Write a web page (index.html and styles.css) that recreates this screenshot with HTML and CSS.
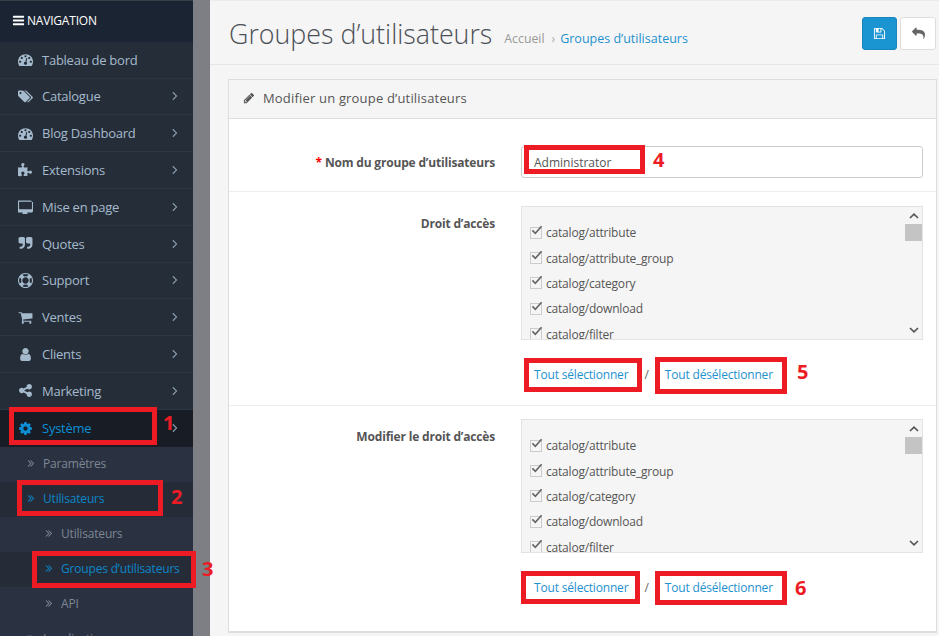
FILE: index.html
```html
<!DOCTYPE html>
<html lang="fr">
<head>
  <meta charset="UTF-8" />
  <title>Groupes d’utilisateurs</title>
  <link rel="stylesheet" href="styles.css">
</head>
<body>

<svg class="icon-defs" xmlns="http://www.w3.org/2000/svg">
  <symbol id="i-bars" viewBox="0 0 1792 1792"><path d="M1664 1344v128q0 26-19 45t-45 19h-1408q-26 0-45-19t-19-45v-128q0-26 19-45t45-19h1408q26 0 45 19t19 45zm0-512v128q0 26-19 45t-45 19h-1408q-26 0-45-19t-19-45v-128q0-26 19-45t45-19h1408q26 0 45 19t19 45zm0-512v128q0 26-19 45t-45 19h-1408q-26 0-45-19t-19-45v-128q0-26 19-45t45-19h1408q26 0 45 19t19 45z"/></symbol>
  <symbol id="i-dash" viewBox="0 0 1792 1792"><path d="M384 1152q0-53-37.5-90.5t-90.5-37.5-90.5 37.5-37.5 90.5 37.5 90.5 90.5 37.5 90.5-37.5 37.5-90.5zm192-448q0-53-37.5-90.5t-90.5-37.5-90.5 37.5-37.5 90.5 37.5 90.5 90.5 37.5 90.5-37.5 37.5-90.5zm428 481l101-382q6-26-7.5-48.5t-38.5-29.5-48 6.5-30 39.5l-101 382q-60 5-107 43.5t-63 98.5q-20 77 20 146t117 89 146-20 89-117q16-60-6-117t-72-91zm660-33q0-53-37.5-90.5t-90.5-37.5-90.5 37.5-37.5 90.5 37.5 90.5 90.5 37.5 90.5-37.5 37.5-90.5zm-640-640q0-53-37.5-90.5t-90.5-37.5-90.5 37.5-37.5 90.5 37.5 90.5 90.5 37.5 90.5-37.5 37.5-90.5zm448 192q0-53-37.5-90.5t-90.5-37.5-90.5 37.5-37.5 90.5 37.5 90.5 90.5 37.5 90.5-37.5 37.5-90.5zm320 448q0 261-141 483-19 29-54 29h-1402q-35 0-54-29-141-221-141-483 0-182 71-348t191-286 286-191 348-71 348 71 286 191 191 286 71 348z"/></symbol>
  <symbol id="i-tags" viewBox="0 0 1920 1792"><path d="M448 448q0-53-37.5-90.5t-90.5-37.5-90.5 37.5-37.5 90.5 37.5 90.5 90.5 37.5 90.5-37.5 37.5-90.5zm1067 576q0 53-37 90l-491 492q-39 37-91 37-53 0-90-37l-715-716q-38-37-64.5-101t-26.5-117v-416q0-52 38-90t90-38h416q53 0 117 26.5t102 64.5l715 714q37 39 37 91zm384 0q0 53-37 90l-491 492q-39 37-91 37-36 0-59-14t-53-45l470-470q37-37 37-90 0-52-37-91l-715-714q-38-38-102-64.5t-117-26.5h224q53 0 117 26.5t102 64.5l715 714q37 39 37 91z"/></symbol>
  <symbol id="i-puzzle" viewBox="0 0 1792 1792"><path d="M1664 1098q0 81-44.5 135t-123.5 54q-41 0-77.5-17.5t-59-38-56.5-38-71-17.5q-110 0-110 124 0 39 16 115t15 115v5q-22 0-33 1-34 3-97.5 11.5t-115.5 13.5-98 5q-61 0-103-26.5t-42-83.5q0-37 17.5-71t38-56.5 38-59 17.5-77.5q0-79-54-123.5t-135-44.5q-84 0-143 45.5t-59 127.5q0 43 15 83t33.5 64.5 33.5 53 15 50.5q0 45-46 89-37 35-117 35-95 0-245-24-9-2-27.5-4t-27.5-4l-13-2q-1 0-3-1-2 0-2-1v-1024q2 1 17.5 3.5t34 5 21.5 3.5q150 24 245 24 80 0 117-35 46-44 46-89 0-22-15-50.5t-33.5-53-33.5-64.5-15-83q0-82 59-127.5t144-45.5q80 0 134 44.5t54 123.5q0 41-17.5 77.5t-38 59-38 56.5-17.5 71q0 57 42 83.5t103 26.5q64 0 180-15t163-17v2q-1 2-3.5 17.5t-5 34-3.5 21.5q-24 150-24 245 0 80 35 117 44 46 89 46 22 0 50.5-15t53-33.5 64.5-33.5 83-15q82 0 127.5 59t45.5 143z"/></symbol>
  <symbol id="i-desktop" viewBox="0 -192 1792 1792"><path d="M1664 992v-832q0-13-9.5-22.5t-22.5-9.5h-1472q-13 0-22.5 9.5t-9.5 22.5v832q0 13 9.5 22.5t22.5 9.5h1472q13 0 22.5-9.5t9.5-22.5zm128-832v1088q0 66-47 113t-113 47h-544q0 37 16 77.5t32 71 16 43.5q0 26-19 45t-45 19h-512q-26 0-45-19t-19-45q0-14 16-44t32-70 16-78h-544q-66 0-113-47t-47-113v-1088q0-66 47-113t113-47h1472q66 0 113 47t47 113z"/></symbol>
  <symbol id="i-quote" viewBox="0 0 1792 1792"><path d="M832 320v704q0 104-40.5 198.5t-109.5 163.5-163.5 109.5-198.5 40.5h-64q-26 0-45-19t-19-45v-128q0-26 19-45t45-19h64q106 0 181-75t75-181v-32q0-40-28-68t-68-28h-224q-80 0-136-56t-56-136v-384q0-80 56-136t136-56h384q80 0 136 56t56 136zm896 0v704q0 104-40.5 198.5t-109.5 163.5-163.5 109.5-198.5 40.5h-64q-26 0-45-19t-19-45v-128q0-26 19-45t45-19h64q106 0 181-75t75-181v-32q0-40-28-68t-68-28h-224q-80 0-136-56t-56-136v-384q0-80 56-136t136-56h384q80 0 136 56t56 136z"/></symbol>
  <symbol id="i-ring" viewBox="0 0 1792 1792"><path d="M896 0q182 0 348 71t286 191 191 286 71 348-71 348-191 286-286 191-348 71-348-71-286-191-191-286-71-348 71-348 191-286 286-191 348-71zm0 128q-190 0-361 90l194 194q82-28 167-28t167 28l194-194q-171-90-361-90zm-678 1129l194-194q-28-82-28-167t28-167l-194-194q-90 171-90 361t90 361zm678 407q190 0 361-90l-194-194q-82 28-167 28t-167-28l-194 194q171 90 361 90zm0-384q159 0 271.5-112.5t112.5-271.5-112.5-271.5-271.5-112.5-271.5 112.5-112.5 271.5 112.5 271.5 271.5 112.5zm484-217l194 194q90-171 90-361t-90-361l-194 194q28 82 28 167t-28 167z"/></symbol>
  <symbol id="i-cart" viewBox="0 0 1792 1792"><path d="M704 1536q0 52-38 90t-90 38-90-38-38-90 38-90 90-38 90 38 38 90zm896 0q0 52-38 90t-90 38-90-38-38-90 38-90 90-38 90 38 38 90zm128-1088v512q0 24-16.5 42.5t-40.5 21.5l-1044 122q13 60 13 70 0 16-24 64h920q26 0 45 19t19 45-19 45-45 19h-1024q-26 0-45-19t-19-45q0-11 8-31.5t16-36 21.5-40 15.5-29.5l-177-823h-204q-26 0-45-19t-19-45 19-45 45-19h256q16 0 28.5 6.5t19.5 15.5 13 24.5 8 26 5.5 29.5 4.5 26h1201q26 0 45 19t19 45z"/></symbol>
  <symbol id="i-user" viewBox="0 0 1792 1792"><path d="M1536 1399q0 109-62.5 187t-150.5 78h-854q-88 0-150.5-78t-62.5-187q0-85 8.5-160.5t31.5-152 58.5-131 94-89 134.5-34.5q131 128 313 128t313-128q76 0 134.5 34.5t94 89 58.5 131 31.5 152 8.5 160.5zm-256-887q0 159-112.5 271.5t-271.5 112.5-271.5-112.5-112.5-271.5 112.5-271.5 271.5-112.5 271.5 112.5 112.5 271.5z"/></symbol>
  <symbol id="i-share" viewBox="0 0 1792 1792"><path d="M1344 1024q133 0 226.5 93.5t93.5 226.5-93.5 226.5-226.5 93.5-226.5-93.5-93.5-226.5q0-12 2-34l-360-180q-92 86-218 86-133 0-226.5-93.5t-93.5-226.5 93.5-226.5 226.5-93.5q126 0 218 86l360-180q-2-22-2-34 0-133 93.5-226.5t226.5-93.5 226.5 93.5 93.5 226.5-93.5 226.5-226.5 93.5q-126 0-218-86l-360 180q2 22 2 34t-2 34l360 180q92-86 218-86z"/></symbol>
  <symbol id="i-cog" viewBox="0 0 1792 1792"><path d="M1152 896q0-106-75-181t-181-75-181 75-75 181 75 181 181 75 181-75 75-181zm512-109v222q0 12-8 23t-20 13l-185 28q-19 54-39 91 35 50 107 138 10 12 10 25t-9 23q-27 37-99 108t-94 71q-12 0-26-9l-138-108q-44 23-91 38-16 136-29 186-7 28-36 28h-222q-14 0-24.5-8.5t-11.5-21.5l-28-184q-49-16-90-37l-141 107q-10 9-25 9-14 0-25-11-126-114-165-168-7-10-7-23 0-12 8-23 15-21 51-66.5t54-70.5q-27-50-41-99l-183-27q-13-2-21-12.5t-8-23.5v-222q0-12 8-23t19-13l186-28q14-46 39-92-40-57-107-138-10-12-10-24 0-10 9-23 26-36 98.5-107.5t94.5-71.5q13 0 26 10l138 107q44-23 91-38 16-136 29-186 7-28 36-28h222q14 0 24.5 8.5t11.5 21.5l28 184q49 16 90 37l142-107q9-9 24-9 13 0 25 10 129 119 165 170 7 8 7 22 0 12-8 23-15 21-51 66.5t-54 70.5q26 50 41 98l183 28q13 2 21 12.5t8 23.5z"/></symbol>
  <symbol id="i-double" viewBox="0 0 1792 1792"><path d="M979 960q0 13-10 23l-466 466q-10 10-23 10t-23-10l-50-50q-10-10-10-23t10-23l393-393-393-393q-10-10-10-23t10-23l50-50q10-10 23-10t23 10l466 466q10 10 10 23zm384 0q0 13-10 23l-466 466q-10 10-23 10t-23-10l-50-50q-10-10-10-23t10-23l393-393-393-393q-10-10-10-23t10-23l50-50q10-10 23-10t23 10l466 466q10 10 10 23z"/></symbol>
  <symbol id="i-angle" viewBox="0 0 8 12"><path d="M2 1.5 6.5 6 2 10.5" fill="none" stroke="currentColor" stroke-width="1.3"/></symbol>
  <symbol id="i-pencil" viewBox="0 0 1792 1792"><path d="M491 1536l91-91-235-235-91 91v107h128v128h107zm523-928q0-22-22-22-10 0-17 7l-542 542q-7 7-7 17 0 22 22 22 10 0 17-7l542-542q7-7 7-17zm-54-192l416 416-832 832h-416v-416zm683 96q0 53-37 90l-166 166-416-416 166-165q36-38 90-38 53 0 91 38l235 234q37 39 37 91z"/></symbol>
  <symbol id="i-save" viewBox="0 0 1792 1792"><path d="M512 1536h768v-384h-768v384zm896 0h128v-896q0-14-10-38.5t-20-34.5l-281-281q-10-10-34-20t-39-10v416q0 40-28 68t-68 28h-576q-40 0-68-28t-28-68v-416h-128v1280h128v-416q0-40 28-68t68-28h832q40 0 68 28t28 68v416zm-384-928v-320q0-13-9.5-22.5t-22.5-9.5h-192q-13 0-22.5 9.5t-9.5 22.5v320q0 13 9.5 22.5t22.5 9.5h192q13 0 22.5-9.5t9.5-22.5zm640 32v928q0 40-28 68t-68 28h-1344q-40 0-68-28t-28-68v-1344q0-40 28-68t68-28h928q40 0 88 20t76 48l280 280q28 28 48 76t20 88z"/></symbol>
  <symbol id="i-reply" viewBox="0 0 1792 1792"><path d="M1792 1120q0 166-127 451-3 7-10.5 24t-13.5 30-13 22q-12 17-28 17-15 0-23.5-10t-8.5-25q0-9 2.5-26.5t2.5-23.5q5-68 5-123 0-101-17.5-181t-48.5-138.5-80-101-105.5-69.5-133-42.5-154-21.5-175.5-6h-224v256q0 26-19 45t-45 19-45-19l-512-512q-19-19-19-45t19-45l512-512q19-19 45-19t45 19 19 45v256h224q713 0 875 403 53 134 53 333z"/></symbol>
  <symbol id="i-check" viewBox="0 0 14 12"><path d="M1.5 6.5 5 10 12.5 1.5" fill="none" stroke="currentColor" stroke-width="2"/></symbol>
  <symbol id="i-up" viewBox="0 0 10 6"><path d="M1 5 5 1.2 9 5" fill="none" stroke="currentColor" stroke-width="1.7"/></symbol>
  <symbol id="i-down" viewBox="0 0 10 6"><path d="M1 1 5 4.8 9 1" fill="none" stroke="currentColor" stroke-width="1.7"/></symbol>
</svg>

<div class="layout">

  <nav class="sidebar">
    <div class="nav-title"><svg class="bars"><use href="#i-bars"/></svg>NAVIGATION</div>
    <ul class="menu">
      <li class="menu-item"><svg class="menu-icon"><use href="#i-dash"/></svg>Tableau de bord</li>
      <li class="menu-item"><svg class="menu-icon"><use href="#i-tags"/></svg>Catalogue<svg class="arrow"><use href="#i-angle"/></svg></li>
      <li class="menu-item"><svg class="menu-icon"><use href="#i-dash"/></svg>Blog Dashboard<svg class="arrow"><use href="#i-angle"/></svg></li>
      <li class="menu-item"><svg class="menu-icon"><use href="#i-puzzle"/></svg>Extensions<svg class="arrow"><use href="#i-angle"/></svg></li>
      <li class="menu-item"><svg class="menu-icon"><use href="#i-desktop"/></svg>Mise en page<svg class="arrow"><use href="#i-angle"/></svg></li>
      <li class="menu-item"><svg class="menu-icon"><use href="#i-quote"/></svg>Quotes<svg class="arrow"><use href="#i-angle"/></svg></li>
      <li class="menu-item"><svg class="menu-icon"><use href="#i-ring"/></svg>Support<svg class="arrow"><use href="#i-angle"/></svg></li>
      <li class="menu-item"><svg class="menu-icon"><use href="#i-cart"/></svg>Ventes<svg class="arrow"><use href="#i-angle"/></svg></li>
      <li class="menu-item"><svg class="menu-icon"><use href="#i-user"/></svg>Clients<svg class="arrow"><use href="#i-angle"/></svg></li>
      <li class="menu-item"><svg class="menu-icon"><use href="#i-share"/></svg>Marketing<svg class="arrow"><use href="#i-angle"/></svg></li>
      <li class="menu-item active"><svg class="menu-icon"><use href="#i-cog"/></svg>Système<svg class="arrow"><use href="#i-angle"/></svg></li>
      <li class="sub-item"><svg class="sub-icon"><use href="#i-double"/></svg>Paramètres</li>
      <li class="sub-item current"><svg class="sub-icon"><use href="#i-double"/></svg>Utilisateurs</li>
      <li class="sub-item deep"><svg class="sub-icon"><use href="#i-double"/></svg>Utilisateurs</li>
      <li class="sub-item deep current"><svg class="sub-icon"><use href="#i-double"/></svg>Groupes d’utilisateurs</li>
      <li class="sub-item deep"><svg class="sub-icon"><use href="#i-double"/></svg>API</li>
      <li class="sub-item"><svg class="sub-icon"><use href="#i-double"/></svg>Localisation</li>
    </ul>
  </nav>

  <div class="gutter"></div>

  <main class="content">
    <header class="page-header">
      <h1>Groupes d’utilisateurs</h1>
      <span class="crumb">Accueil</span>
      <span class="crumb-sep">›</span>
      <a class="crumb-link">Groupes d’utilisateurs</a>
      <div class="actions">
        <button class="btn btn-primary"><svg><use href="#i-save"/></svg></button>
        <button class="btn btn-default"><svg><use href="#i-reply"/></svg></button>
      </div>
    </header>

    <section class="panel">
      <div class="panel-heading"><svg><use href="#i-pencil"/></svg>Modifier un groupe d’utilisateurs</div>

      <div class="form-row row-name">
        <label class="form-label"><span class="required">*</span> Nom du groupe d’utilisateurs</label>
        <div class="form-field"><input class="text-input" type="text" value="Administrator"></div>
      </div>

      <div class="form-row row-access">
        <label class="form-label">Droit d’accès</label>
        <div class="form-field">
          <div class="well">
            <div class="well-list">
              <div class="perm"><span class="tick"><svg><use href="#i-check"/></svg></span>catalog/attribute</div>
              <div class="perm"><span class="tick"><svg><use href="#i-check"/></svg></span>catalog/attribute_group</div>
              <div class="perm"><span class="tick"><svg><use href="#i-check"/></svg></span>catalog/category</div>
              <div class="perm"><span class="tick"><svg><use href="#i-check"/></svg></span>catalog/download</div>
              <div class="perm"><span class="tick"><svg><use href="#i-check"/></svg></span>catalog/filter</div>
            </div>
            <div class="scrollbar">
              <svg class="scroll-arrow"><use href="#i-up"/></svg>
              <div class="scroll-thumb"></div>
              <svg class="scroll-arrow down"><use href="#i-down"/></svg>
            </div>
          </div>
          <div class="select-links"><a>Tout sélectionner</a><span class="slash">/</span><a>Tout désélectionner</a></div>
        </div>
      </div>

      <div class="form-row row-modify">
        <label class="form-label">Modifier le droit d’accès</label>
        <div class="form-field">
          <div class="well">
            <div class="well-list">
              <div class="perm"><span class="tick"><svg><use href="#i-check"/></svg></span>catalog/attribute</div>
              <div class="perm"><span class="tick"><svg><use href="#i-check"/></svg></span>catalog/attribute_group</div>
              <div class="perm"><span class="tick"><svg><use href="#i-check"/></svg></span>catalog/category</div>
              <div class="perm"><span class="tick"><svg><use href="#i-check"/></svg></span>catalog/download</div>
              <div class="perm"><span class="tick"><svg><use href="#i-check"/></svg></span>catalog/filter</div>
            </div>
            <div class="scrollbar">
              <svg class="scroll-arrow"><use href="#i-up"/></svg>
              <div class="scroll-thumb"></div>
              <svg class="scroll-arrow down"><use href="#i-down"/></svg>
            </div>
          </div>
          <div class="select-links"><a>Tout sélectionner</a><span class="slash">/</span><a>Tout désélectionner</a></div>
        </div>
      </div>
    </section>
  </main>
</div>

<!-- repères rouges posés sur la capture -->
<div class="mark mark-1"></div><span class="digit digit-1">1</span>
<div class="mark mark-2"></div><span class="digit digit-2">2</span>
<div class="mark mark-3"></div><span class="digit digit-3">3</span>
<div class="mark mark-4"></div><span class="digit digit-4">4</span>
<div class="mark mark-5a"></div><div class="mark mark-5b"></div><span class="digit digit-5">5</span>
<div class="mark mark-6a"></div><div class="mark mark-6b"></div><span class="digit digit-6">6</span>

</body>
</html>
```

FILE: styles.css
```css
html, body {
  height: 100%;
}
body {
  margin: 0;
  position: relative;
  overflow: hidden;
  font-family: "Open Sans", sans-serif;
  font-size: 12px;
  color: #555;
  background: #f5f5f5;
}
.icon-defs {
  display: none;
}
svg {
  fill: currentColor;
}

.layout {
  display: flex;
  height: 636px;
  overflow: hidden;
}

/* sidebar */
.sidebar {
  width: 193px;
  flex: none;
  background: #252d38;
  overflow: hidden;
}
.nav-title {
  display: flex;
  align-items: center;
  height: 38.75px;
  padding: 0 0 2px 12px;
  background: #1b2432;
  color: #fff;
  font-size: 12px;
  letter-spacing: -0.2px;
  border-top: 1px solid #3a3f47;
}
.bars {
  width: 13px;
  height: 13px;
  margin-right: 2px;
}
.menu {
  list-style: none;
  margin: 0;
  padding: 0;
}
.menu-item {
  display: flex;
  align-items: center;
  height: 36.8px;
  box-sizing: border-box;
  padding-left: 18px;
  font-size: 13px;
  letter-spacing: -0.25px;
  color: #a5bbcd;
  border-bottom: 1px solid #2c3742;
}
.menu-icon {
  width: 15px;
  height: 15px;
  margin-right: 9px;
  flex: none;
}
.arrow {
  width: 7px;
  height: 10px;
  margin-left: auto;
  margin-right: 15px;
  color: #8a9dae;
}
.menu-item.active {
  background: #181c24;
  color: #0c8fd6;
  border-bottom: 0;
}
.sub-item {
  display: flex;
  align-items: center;
  height: 35px;
  box-sizing: border-box;
  padding: 0 0 2px 25px;
  font-size: 12px;
  letter-spacing: -0.18px;
  color: #7e8796;
  background: #2a3140;
}
.sub-item.deep {
  padding-left: 43px;
}
.sub-item.current {
  background: #252c38;
  color: #0c86c9;
}
.sub-icon {
  width: 12px;
  height: 12px;
  margin-right: 6px;
  flex: none;
}
.gutter {
  width: 17px;
  flex: none;
  background: #7d7f85;
}

/* contenu */
.content {
  flex: 1;
  min-width: 0;
}
.page-header {
  display: flex;
  align-items: center;
  height: 65px;
  padding: 1px 3px 0 19px;
  box-sizing: border-box;
  border-top: 1px solid #ebebeb;
  border-bottom: 1px solid #e6e6e6;
}
.page-header h1 {
  margin: 0 12px 0 0;
  font-size: 26.8px;
  font-weight: 300;
  color: #4b4f56;
}
.crumb {
  font-size: 12.3px;
  color: #999;
  position: relative;
  top: 5px;
}
.crumb-sep {
  margin: 0 5px 0 7px;
  color: #aaa;
  position: relative;
  top: 5px;
}
.crumb-link {
  font-size: 12.5px;
  color: #1e91cf;
  position: relative;
  top: 5px;
}
.actions {
  display: flex;
  gap: 3px;
  margin-left: auto;
}
.btn {
  display: flex;
  align-items: center;
  justify-content: center;
  height: 33px;
  padding: 0;
  border-radius: 3px;
  border: 1px solid #ddd;
}
.btn svg {
  width: 13px;
  height: 13px;
}
.btn-primary {
  width: 35px;
  background: #1b94d2;
  border-color: #1a84bd;
  color: #fff;
}
.btn-default {
  width: 36px;
  background: #fff;
  color: #666;
}

.panel {
  margin: 14px 2px 0 18px;
  background: #fff;
  border: 1px solid #ddd;
  border-bottom-width: 2px;
  height: 554px;
  box-sizing: border-box;
}
.panel-heading {
  display: flex;
  align-items: center;
  height: 36px;
  padding: 0 0 2px 14px;
  background: #f5f5f5;
  border-bottom: 1px solid #ddd;
  font-size: 13px;
  letter-spacing: 0.18px;
  color: #555;
}
.panel-heading svg {
  width: 12px;
  height: 12px;
  margin-right: 8px;
}
.form-row {
  display: grid;
  grid-template-columns: 266px 1fr;
  column-gap: 26px;
  border-bottom: 1px solid #ededed;
  box-sizing: border-box;
}
.row-name {
  height: 73px;
  padding-top: 27px;
}
.row-access {
  height: 214px;
  padding-top: 14px;
}
.row-modify {
  padding-top: 13px;
  border-bottom: 0;
}
.form-label {
  text-align: right;
  font-weight: 700;
  font-size: 12px;
  letter-spacing: -0.18px;
  color: #555;
  padding-top: 8px;
}
.row-access .form-label,
.row-modify .form-label {
  padding-top: 9px;
}
.required {
  color: #f00;
}
.form-field {
  margin-right: 13px;
}
.text-input {
  display: block;
  width: 100%;
  height: 32px;
  box-sizing: border-box;
  padding: 0 12px;
  border: 1px solid #ccc;
  border-radius: 3px;
  font-family: inherit;
  font-size: 12px;
  color: #555;
}

.well {
  display: flex;
  height: 134px;
  box-sizing: border-box;
  background: #f5f5f5;
  border: 1px solid #e3e3e3;
  overflow: hidden;
}
.well-list {
  flex: 1;
  padding: 13px 0 0 8px;
}
.perm {
  display: flex;
  align-items: center;
  height: 25.4px;
  font-size: 12px;
  letter-spacing: -0.2px;
  color: #555;
}
.tick {
  position: relative;
  width: 10px;
  height: 10px;
  flex: none;
  margin-right: 4px;
  background: #f5f5f5;
  border: 1px solid #ccc;
}
.tick svg {
  position: absolute;
  left: 0;
  top: -3px;
  width: 12px;
  height: 10px;
  color: #666;
}
.scrollbar {
  position: relative;
  width: 17px;
  flex: none;
}
.scroll-arrow {
  display: block;
  width: 10px;
  height: 6px;
  margin: 6px auto 0;
  color: #555;
}
.scroll-arrow.down {
  position: absolute;
  left: 4px;
  bottom: 6px;
  margin: 0;
}
.scroll-thumb {
  height: 17px;
  margin-top: 5px;
  background: #c4c4c4;
}
.select-links {
  display: flex;
  align-items: center;
  height: 18px;
  margin-top: 25px;
  padding-left: 13px;
  font-size: 12px;
}
.select-links a {
  color: #1e91cf;
  letter-spacing: -0.18px;
}
.slash {
  margin: 0 16px;
  color: #666;
}

/* repères */
.mark {
  position: absolute;
  box-sizing: border-box;
  border: 5px solid #ed1c24;
}
.mark-1 { left: 9px; top: 407px; width: 148px; height: 38px; }
.mark-2 { left: 17px; top: 480px; width: 146px; height: 36px; }
.mark-3 { left: 32px; top: 551px; width: 164px; height: 37px; }
.mark-4 { left: 524px; top: 145px; width: 121px; height: 29px; }
.mark-5a { left: 524px; top: 358px; width: 118px; height: 34px; }
.mark-5b { left: 655px; top: 357px; width: 132px; height: 37px; }
.mark-6a { left: 521px; top: 571px; width: 119px; height: 33px; }
.mark-6b { left: 655px; top: 571px; width: 132px; height: 34px; }
.digit {
  position: absolute;
  font-size: 20px;
  line-height: 24px;
  font-weight: 700;
  color: #ed1c24;
}
.digit-1 { left: 163px; top: 411px; }
.digit-2 { left: 171px; top: 485px; }
.digit-3 { left: 202px; top: 557px; }
.digit-4 { left: 653px; top: 148px; }
.digit-5 { left: 797px; top: 360px; }
.digit-6 { left: 795px; top: 576px; }
```
